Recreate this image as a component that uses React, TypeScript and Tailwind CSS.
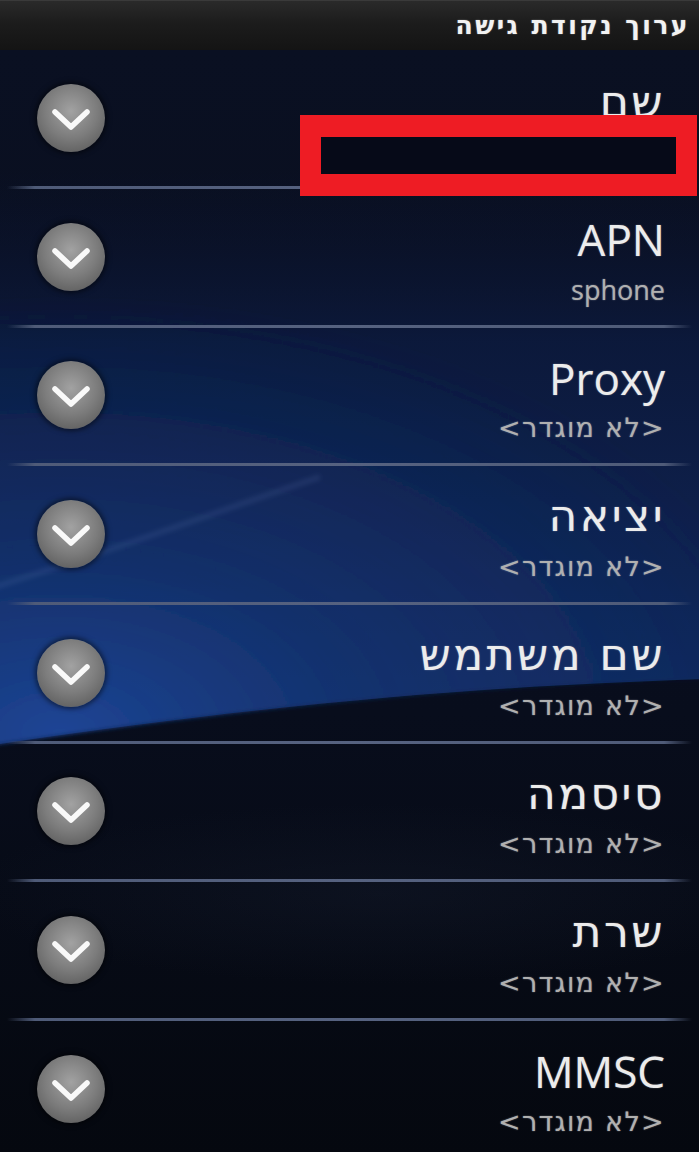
import React from "react";

type Field = { label: string; value?: string };

// APN editor fields, top to bottom. The first one ("name") is left without a value.
const FIELDS: Field[] = [
  { label: "שם" },
  { label: "APN", value: "sphone" },
  { label: "Proxy", value: "<לא מוגדר>" },
  { label: "יציאה", value: "<לא מוגדר>" },
  { label: "שם משתמש", value: "<לא מוגדר>" },
  { label: "סיסמה", value: "<לא מוגדר>" },
  { label: "שרת", value: "<לא מוגדר>" },
  { label: "MMSC", value: "<לא מוגדר>" },
];

const LATIN = "font-['Open_Sans','Liberation_Sans',sans-serif]";
const HEBREW = "font-['DejaVu_Sans','Liberation_Sans',sans-serif]";
const GLOW = "[text-shadow:0_0_1.5px_rgba(255,255,255,0.45)]";
const isHebrew = (s: string) => /[\u0590-\u05FF]/.test(s);

function ExpandButton() {
  return (
    <span className="flex size-[68px] shrink-0 items-center justify-center rounded-full bg-[radial-gradient(circle_at_50%_40%,#a2a2a2_0%,#7c7c7c_50%,#505050_100%)] shadow-[0_0_5px_2px_rgba(0,0,0,0.5)]">
      <svg viewBox="0 0 68 68" className="size-[68px]" aria-hidden>
        <path
          d="M18 28 L34 43 L50 28"
          fill="none"
          stroke="#ffffff"
          strokeWidth="5.5"
          strokeLinecap="round"
          strokeLinejoin="round"
          opacity="0.95"
        />
      </svg>
    </span>
  );
}

function Wallpaper() {
  return (
    <svg
      className="pointer-events-none absolute inset-0 h-full w-full"
      viewBox="0 0 699 1102"
      preserveAspectRatio="none"
      aria-hidden
    >
      <defs>
        <linearGradient id="base" x1="0" y1="0" x2="0" y2="1">
          <stop offset="0" stopColor="#0a1022" />
          <stop offset="0.6" stopColor="#080d1c" />
          <stop offset="1" stopColor="#05080f" />
        </linearGradient>
        <linearGradient id="swoosh" gradientUnits="userSpaceOnUse" x1="0" y1="120" x2="0" y2="690">
          <stop offset="0" stopColor="#0b1430" stopOpacity="0" />
          <stop offset="0.3" stopColor="#0c1a3e" stopOpacity="0.9" />
          <stop offset="0.7" stopColor="#0f2250" />
          <stop offset="1" stopColor="#112a60" />
        </linearGradient>
        <radialGradient
          id="glow"
          gradientUnits="userSpaceOnUse"
          cx="60"
          cy="680"
          r="440"
          gradientTransform="translate(60 680) scale(1.7 1) translate(-60 -680)"
        >
          <stop offset="0" stopColor="#1d4698" stopOpacity="0.95" />
          <stop offset="0.4" stopColor="#173a7e" stopOpacity="0.55" />
          <stop offset="1" stopColor="#163676" stopOpacity="0" />
        </radialGradient>
        <radialGradient id="lowsheen" cx="0.5" cy="0.5" r="0.5">
          <stop offset="0" stopColor="#1a2234" stopOpacity="0.3" />
          <stop offset="1" stopColor="#1a2234" stopOpacity="0" />
        </radialGradient>
        <filter id="soft" x="-10%" y="-10%" width="120%" height="120%">
          <feGaussianBlur stdDeviation="2" />
        </filter>
      </defs>
      <rect width="699" height="1102" fill="url(#base)" />
      <ellipse cx="380" cy="840" rx="420" ry="90" fill="url(#lowsheen)" />
      <path d="M-20 120 L720 120 L720 626 C 520 632 300 646 -20 694 Z" fill="url(#swoosh)" />
      <path
        d="M-20 150 L720 150 L720 626 C 520 632 300 646 -20 694 Z"
        fill="url(#glow)"
        filter="url(#soft)"
      />
      <path
        d="M-10 536 C 110 500 210 462 320 425"
        fill="none"
        stroke="#7a95cc"
        strokeOpacity="0.12"
        strokeWidth="6"
        filter="url(#soft)"
      />
    </svg>
  );
}

function Divider() {
  return (
    <div className="h-[3px] shrink-0 bg-[linear-gradient(to_right,transparent_1%,#4f5b78_5%,#566280_50%,#4f5b78_95%,transparent_99%)]" />
  );
}

function FieldRow({ field, first }: { field: Field; first: boolean }) {
  const labelFont = isHebrew(field.label) ? `${HEBREW} tracking-[2.5px]` : `${LATIN} font-medium`;
  const valueFont =
    field.value && isHebrew(field.value) ? `${HEBREW} tracking-[1.3px]` : `${LATIN} font-medium`;
  return (
    <div
      className={`flex shrink-0 items-center justify-between pl-[37px] pr-[34px] ${
        first ? "h-[136px]" : "h-[135.67px]"
      }`}
    >
      <ExpandButton />
      <div dir="rtl" className={`flex h-full flex-col text-right ${first ? "pt-[26px]" : "pt-[24px]"}`}>
        <span className={`text-[44px] leading-[1.2] text-[#ececec] ${GLOW} ${labelFont}`}>{field.label}</span>
        {field.value && (
          <span className={`mt-[8px] text-[27px] leading-[1.2] text-[#b0b0b0] ${GLOW} ${valueFont}`}>
            {field.value}
          </span>
        )}
      </div>
    </div>
  );
}

export default function App() {
  return (
    <div className={`flex h-[1152px] w-[699px] flex-col overflow-hidden bg-[#080d1c] ${LATIN}`}>
      <header
        dir="rtl"
        className={`flex h-[50px] shrink-0 items-center border-t border-[#3a3a3a] bg-[linear-gradient(to_bottom,#2a2a2a,#1c1c1c_45%,#141414)] pr-[9px] text-[25px] font-bold tracking-[2.5px] text-[#f2f2f2] ${GLOW} ${HEBREW}`}
      >
        ערוך נקודת גישה
      </header>

      <main className="relative flex flex-1 flex-col">
        <Wallpaper />
        <div className="relative flex flex-col">
          {FIELDS.map((f, i) => (
            <React.Fragment key={f.label}>
              <FieldRow field={f} first={i === 0} />
              {i < FIELDS.length - 1 && <Divider />}
            </React.Fragment>
          ))}
        </div>

        {/* annotation box drawn over the empty name value */}
        <div className="absolute left-[300px] top-[65px] h-[81px] w-[397px] border-x-[21px] border-y-[22px] border-[#ee1c24] bg-[#060a18]" />
      </main>
    </div>
  );
}
